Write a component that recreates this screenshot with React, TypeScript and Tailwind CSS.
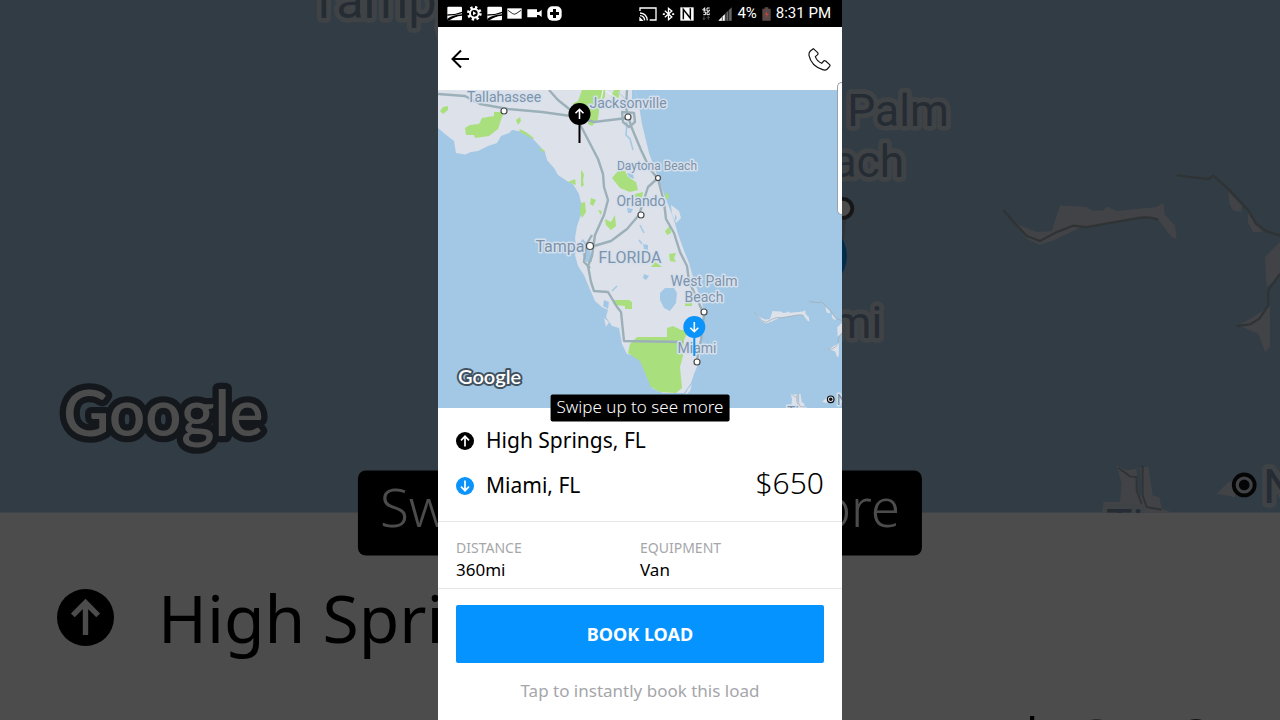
import { ReactNode } from "react";
import { clsx } from "clsx";

interface MapLabelProps {
  x: number;
  y: number;
  size?: number;
  children: ReactNode;
}

const LAND =
  "M438 90V128L445 134L454 141L456 153L465 154.500L471 152L478 151L488 146L497 143L501 136L509 133L512 130L518 131L526 132L535 141L545 152L547 160L554 168L558 175L567 181L573 184L579 194L581 203L581 215L577 226L575 238L576 246L575 255L578 266L584 275L589 287L595 301L602 307L608 310L606 317L612 326L619 328L622 344L627 354L640 357L645 370L652 388L663 393L684 393L691 383L694 374L699 362L701 349L702 333L704 315L702 302L694 281L689 263L683 248L678 234L673 217L665 197L657 175L649 153L642 124L638 100L635 90Z";

const PARKS = [
  "M440 111L443 107L448 106L448 110L443 114Z",
  "M465 128L470 125L479 124L482 118L494 116L494 112L504 112L501 120L498 129L489 136L475 138L474 135L466 135Z",
  "M516 120L520 117L521 121L518 125Z",
  "M519 129L522 130L527 133L534 138L533 139L526 135L521 133Z",
  "M539 148L544 150L545 152L541 151Z",
  "M582 90H605V97L600 103L598 119L592 126L588 124V110L580 107L572 104L578 101Z",
  "M614 90H620L618 100L611 97Z",
  "M612 178L618 171L625 171L628 177L636 182L638 190L630 192L620 188Z",
  "M581 170L584 174L583 181L584 185L581 187Z",
  "M568 182L575 179L576 185Z",
  "M581 203L585 202L586 212L582 218L580 213Z",
  "M591 198L596 200L593 206L590 204Z",
  "M605 219L611 222L615 215L616 226L611 230L606 225Z",
  "M598 210L602 211L601 215Z",
  "M635 194L643 192L642 199L635 201Z",
  "M666 192L669 195L668 200L665 197Z",
  "M665 231L670 226L671 233L667 235Z",
  "M669 254L676 253L674 258L676 262L670 261Z",
  "M651 267L655 262L658 264L662 267Z",
  "M613 300H629L632 302V309H625V306L614 305Z",
  "M685 301H692V306H685Z",
  "M630 344L637 337H667V328L673 326L681 330L689 330L684 340L683 356L680 367L682 388L676 393L660 392L651 387L640 361L628 353Z",
];

const ROADS = [
  "M438 94L465 96L480 104L508 109L542 112L578 117L594 122L627 118",
  "M549 90L558 100L573 112L583 130L598 159L603 174L604 187L608 200L604 215L595 235L592 256L588 266L591 282L594 291L608 292L617 307L621 312L624 341L683 342",
  "M627 90L626 108L631 126L641 150L650 169L658 179L664 202L666 219L674 233L680 252L687 266L689 281L698 301L704 315L701 340L697 360",
  "M594 246L611 241L627 229L639 215L648 187L658 178",
  "M592 235L586 245L584 262L590 268",
];

function MapLabel({ x, y, size = 14, children }: MapLabelProps) {
  return (
    <text
      x={x}
      y={y}
      fontSize={size}
      textAnchor="middle"
      className="fill-[#7c93ab] stroke-[#d6e0ec] stroke-3 font-[Roboto,sans-serif]"
      paintOrder="stroke"
      strokeLinejoin="round"
    >
      {children}
    </text>
  );
}

function CityDot({ x, y, r = 3 }: { x: number; y: number; r?: number }) {
  return <circle cx={x} cy={y} r={r} fill="#fff" stroke="#4a4a4a" strokeWidth="1.2" />;
}

function FloridaMap() {
  return (
    <svg viewBox="438 90 404 318" className="block w-full shrink-0" role="img" aria-label="Route map">
      <rect x="438" y="90" width="404" height="318" fill="#a3c8e5" />
      <path d={LAND} fill="#dde1ea" />

      {/* keys and barrier islands */}
      <g fill="#dde1ea">
        <path d="M671 205L679 211L681 218L676 223L672 214Z" />
        <path d="M692 384L690 391L684 397L688 389Z" />
        <path d="M604 318L609 322L606 327Z" />
      </g>
      {PARKS.map((d) => (
        <path key={d} d={d} fill="#a9df7d" />
      ))}

      {/* lakes and rivers */}
      <g fill="#a3c8e5">
        <path d="M660 293L665 288L674 288L677 293L676 303L670 311L664 308L660 300Z" />
        <path d="M627 173L633 174L634 179L629 177Z" />
        <path d="M627 208L633 209L631 213L628 213Z" />
        <path d="M583 239L590 248L592 262L586 262L581 250L579 243Z" />
        <path d="M643 244L648 245L648 250L644 249Z" />
        <path d="M644 274L649 276L646 280L643 278Z" />
        <path d="M675 214L677 218L675 221Z" />
        <path d="M604 300L609 302L608 309L603 306Z" />
        <path d="M632 90H635L638 101L632 99Z" />
      </g>
      <g fill="none" stroke="#a3c8e5" strokeWidth="1.5">
        <path d="M627 122L626 135L630 139L633 150" />
        <path d="M612 291L617 286" />
        <path d="M640 225L644 233M639 240L642 244" />
      </g>

      <g fill="none" stroke="#c4d2da" strokeWidth="1.2">
        <path d="M603 90L600 105M606 91L624 103M600 107L625 100" stroke="#eef1f5" />
        <path d="M618 92L635 108" />
      </g>
      <g fill="none" stroke="#9bb0b9" strokeWidth="2.4" strokeLinejoin="round">
        {ROADS.map((d) => (
          <path key={d} d={d} />
        ))}
        <path d="M622 112L634 113L635 122L629 127L623 122Z" />
      </g>

      {/* Bahamas */}
      <g transform="translate(703.130 265.300) scale(.1052)">
        <path
          fill="#dde1ea"
          d="M490 450L540 495L590 515L635 512L660 435L740 440L755 450L790 450L800 438L830 452L950 440L970 428L974 462L1005 495L1010 535L995 530L952 474L900 472L720 502L640 540L600 553L560 535ZM1165 395L1205 435V455L1180 450L1168 430ZM1225 455L1267 515L1240 515L1224 488ZM1320 545L1275 590L1280 680L1320 645ZM1195 795L1240 770L1290 735V860L1275 875L1255 820Z"
        />
        <path
          fill="none"
          stroke="#9faaaf"
          strokeWidth="7"
          d="M490 450L560 527L600 542L650 515L700 496L740 500L900 472Q935 468 955 478M1010 345L1080 353L1105 356L1120 346L1170 390L1225 450L1248 490L1280 513L1320 525M1190 797L1230 792L1258 775L1285 735V690L1320 640"
        />
      </g>
      <g transform="translate(703.130 366.300) scale(.1052)">
        <path
          fill="#dde1ea"
          d="M830 255L860 270L925 258L938 345L958 350L965 385L1000 398H790V365H840L845 310ZM1130 340L1165 305L1190 300L1185 350Z"
        />
        <path fill="none" stroke="#9faaaf" strokeWidth="6" d="M835 262L870 288L890 290V330L905 370M908 255V345L920 380L965 388" />
        <path d="M895 265L902 345" stroke="#a3c8e5" strokeWidth="12" />
      </g>

      <MapLabel x={504} y={102}>Tallahassee</MapLabel>
      <MapLabel x={628} y={108}>Jacksonville</MapLabel>
      <MapLabel x={657} y={170} size={12}>Daytona Beach</MapLabel>
      <MapLabel x={641} y={206}>Orlando</MapLabel>
      <MapLabel x={560} y={252} size={16}>Tampa</MapLabel>
      <MapLabel x={630} y={263} size={16}>FLORIDA</MapLabel>
      <MapLabel x={704} y={286}>West Palm</MapLabel>
      <MapLabel x={704} y={302}>Beach</MapLabel>
      <MapLabel x={697} y={353}>Miami</MapLabel>
      <MapLabel x={793} y={417}>Ti</MapLabel>
      <MapLabel x={842} y={405} size={15}>N</MapLabel>

      <CityDot x={504} y={111} />
      <CityDot x={628} y={117} />
      <CityDot x={658} y={178} r={2.500} />
      <CityDot x={641} y={215} />
      <CityDot x={590} y={246} r={3.500} />
      <CityDot x={704} y={312} />
      <CityDot x={697} y={362} />
      <circle cx="830.700" cy="399.300" r="3.300" fill="#dde1ea" stroke="#111" strokeWidth="1.200" />
      <circle cx="830.700" cy="399.300" r="1.700" fill="#111" />

      {/* pickup and dropoff pins */}
      <path d="M579.500 120V143" stroke="#000" strokeWidth="2" />
      <circle cx="579.500" cy="114" r="11" fill="#000" />
      <path d="M579.500 119V109.500M575.500 113.300L579.500 109.300L583.500 113.300" fill="none" stroke="#fff" strokeWidth="1.600" />
      <path d="M694.300 334V356" stroke="#0a93fb" strokeWidth="2" />
      <circle cx="694.300" cy="327" r="11" fill="#0a93fb" />
      <path d="M694.300 322V331.500M690.300 327.700L694.300 331.700L698.300 327.700" fill="none" stroke="#fff" strokeWidth="1.600" />

      <text
        x="458"
        y="384"
        fontSize="20"
        className="fill-white stroke-[#43525f] stroke-4 font-[Lato,sans-serif] font-semibold"
        paintOrder="stroke"
        strokeLinejoin="round"
      >
        Google
      </text>
    </svg>
  );
}

function StopIcon({ type, className }: { type: "pickup" | "dropoff"; className: string }) {
  return (
    <svg viewBox="0 0 18 18" className={clsx("shrink-0", className)} aria-hidden="true">
      <circle cx="9" cy="9" r="9" fill={type === "pickup" ? "#000" : "#0a93fb"} />
      <path
        d={type === "pickup" ? "M9 14.500V4.500M5 8.300L9 4.300L13 8.300" : "M9 3.500V13.500M5 9.700L9 13.700L13 9.700"}
        fill="none"
        stroke="#fff"
        strokeWidth="1.700"
      />
    </svg>
  );
}

function StatusBar() {
  return (
    <div className="flex h-[27px] items-center justify-between bg-black pr-[11px] pl-[9px] font-[Roboto,sans-serif] text-[15px] text-white">
      <div className="flex items-center gap-[5px]">
        <RoadIcon />
        <svg viewBox="0 0 45 45" className="size-[15px]">
          <circle cx="22" cy="22" r="18" fill="none" stroke="#fff" strokeWidth="8" strokeDasharray="7 7.100" />
          <circle cx="22" cy="22" r="13" fill="none" stroke="#fff" strokeWidth="6" />
          <path d="M18 16L28 22L18 28Z" fill="#fff" />
        </svg>
        <RoadIcon />
        <svg viewBox="0 0 45 45" className="size-[15px]">
          <path d="M1 7H44V38H1Z" fill="#fff" />
          <path d="M3 13L17 23Q22 26 27 23L42 13" fill="none" stroke="#000" strokeWidth="2.500" />
        </svg>
        <svg viewBox="0 0 45 45" className="size-[15px]">
          <path d="M1 10H30V18L36 18L44 11V33L36 27H30V34H1Z" fill="#fff" />
        </svg>
        <svg viewBox="0 0 45 45" className="size-[15px]">
          <rect x="1" y="1" width="43" height="43" rx="15" fill="#fff" />
          <path d="M18 9H27V18H36V27H27V36H18V27H9V18H18Z" fill="#000" />
        </svg>
      </div>
      <div className="flex items-center gap-[5px]">
        <svg viewBox="0 0 54 42" className="h-[14px] w-[18px]" fill="none" stroke="#fff" strokeWidth="4">
          <path d="M3 12V3H51V39H32M3 18Q23 19 25 40M3 26Q16 27 17 40" />
          <path d="M3 34L9 40H3Z" fill="#fff" />
        </svg>
        <svg viewBox="0 0 38 42" className="h-[14px] w-[13px]">
          <path d="M8 11L29 30L19 38V4L29 12L8 31" fill="none" stroke="#fff" strokeWidth="4" />
          <path d="M2 19H8V24H2ZM30 19H36V24H30Z" fill="#fff" />
        </svg>
        <svg viewBox="0 0 42 42" className="size-[14px]">
          <path d="M1 1H41V41H1Z" fill="#fff" />
          <path d="M10 37V7L31 34V4" fill="none" stroke="#000" strokeWidth="4.500" />
        </svg>
        <svg viewBox="0 0 42 42" className="size-[14px]" fill="none" stroke="#fff" strokeWidth="3">
          <path d="M17 2L11 9H20M17 2V13M32 3H24V12H31V8M13 15H20V23H13M31 15H24V23H31V19" />
          <path d="M15 28V38M11 34L15 38L19 34M28 38V28M24 32L28 28L32 32" stroke="#555" />
        </svg>
        <svg viewBox="0 0 42 42" className="size-[14px]">
          <path d="M41 1V41H1Z" fill="#666" />
          <path d="M20 22V41H1Z" fill="#fff" />
          <path d="M13 29V41M24 18V41M32 10V41" stroke="#000" strokeWidth="2" />
        </svg>
        <span>4%</span>
        <svg viewBox="0 0 27 42" className="h-[14px] w-[9px]">
          <path d="M8 1H19V5H26V41H1V5H8Z" fill="#5a4a47" />
          <path d="M15 12L9 23H14L12 33L19 20H14Z" fill="#d0443c" />
        </svg>
        <span>8:31 PM</span>
      </div>
    </div>
  );
}

function RoadIcon() {
  return (
    <svg viewBox="0 0 45 45" className="size-[15px]">
      <rect x="1" y="2" width="44" height="41" rx="3" fill="#fff" />
      <path d="M1 25Q24 26 45 17V22Q24 29 1 29ZM1 38Q15 27 45 25V29Q20 31 8 43H1Z" fill="#000" />
      <path d="M14 36Q22 32 29 31" stroke="#000" strokeWidth="3" />
    </svg>
  );
}

// Enlarged, dimmed copy of the load screen that fills the space beside the phone
function Backdrop() {
  return (
    <div className="absolute inset-0 overflow-hidden bg-white" aria-hidden="true">
      <div className="relative flex h-[513px] flex-col justify-end">
        <FloridaMap />
        <div className="absolute bottom-0 left-1/2 -translate-x-1/2 translate-y-1/2 rounded-lg bg-black px-[22px] pb-[13px] text-[53px] leading-[72px] font-light whitespace-nowrap text-white">
          Swipe up to see more
        </div>
      </div>
      <div className="px-[57px] pt-[33px] text-[66px]">
        <div className="flex h-[142px] items-center gap-11">
          <StopIcon type="pickup" className="size-[57px]" />
          <span>High Springs, FL</span>
        </div>
        <div className="text-right text-[95px] leading-[128px] font-light">$650</div>
      </div>
      <div className="absolute inset-0 bg-black/70" />
    </div>
  );
}

export default function App() {
  return (
    <div className="relative min-h-screen overflow-hidden font-['Noto_Sans','Open_Sans',sans-serif] text-black">
      <Backdrop />

      <main className="relative mx-auto min-h-screen w-full max-w-[404px] bg-white">
        <StatusBar />

        <header className="flex h-[63px] items-center justify-between pr-[10px] pl-3">
          <button type="button" aria-label="Back" className="flex size-6 items-center justify-start">
            <svg viewBox="0 0 20 20" className="size-5" fill="none" stroke="#000" strokeWidth="2">
              <path d="M19 10H3M11 1.500L2.500 10L11 18.500" />
            </svg>
          </button>
          <button type="button" aria-label="Call" className="flex size-6 items-center justify-end">
            <svg viewBox="1110 139 72 72" className="size-6" fill="none" stroke="#111" strokeWidth="3.500" strokeLinejoin="round">
              <path d="M1126 144L1139 156Q1141 159 1139 162L1132 168Q1137 182 1151 188L1157 181Q1160 179 1163 181L1175 192Q1177 194 1175 197L1168 205Q1162 210 1154 207Q1119 195 1113 164Q1112 156 1117 151Z" />
            </svg>
          </button>
        </header>

        <div className="absolute top-[82px] right-0 z-10 h-[133px] w-[5px] rounded-l-md border border-r-0 border-gray-400 bg-white" />

        <section className="relative">
          <FloridaMap />
          <div className="absolute bottom-0 left-1/2 -translate-x-1/2 translate-y-1/2 rounded-xs bg-black px-[6px] pb-1 text-[17px] leading-[23px] font-light whitespace-nowrap text-white">
            Swipe up to see more
          </div>
        </section>

        <section className="border-b border-gray-200 px-[18px] pt-[10px] pb-[13px] text-[21px]">
          <div className="flex h-[45px] items-center gap-3">
            <StopIcon type="pickup" className="size-[18px]" />
            <span>High Springs, FL</span>
          </div>
          <div className="flex h-[45px] items-center gap-3">
            <StopIcon type="dropoff" className="size-[18px]" />
            <span>Miami, FL</span>
            <span className="ml-auto self-start text-[30px] leading-10 font-light">$650</span>
          </div>
        </section>

        <dl className="grid grid-cols-2 border-b border-gray-200 px-[18px] pt-4 pb-[6px]">
          <div>
            <dt className="text-sm leading-5 text-[#a5a6aa]">DISTANCE</dt>
            <dd className="text-[17px] leading-6">360mi</dd>
          </div>
          <div>
            <dt className="text-sm leading-5 text-[#a5a6aa]">EQUIPMENT</dt>
            <dd className="text-[17px] leading-6">Van</dd>
          </div>
        </dl>

        <footer className="px-[18px] py-4 text-center">
          <button type="button" className="h-[58px] w-full rounded-xs bg-[#0593ff] text-lg font-bold text-white">
            BOOK LOAD
          </button>
          <p className="mt-4 text-[17px] leading-6 text-[#a5a6aa]">Tap to instantly book this load</p>
        </footer>
      </main>
    </div>
  );
}
